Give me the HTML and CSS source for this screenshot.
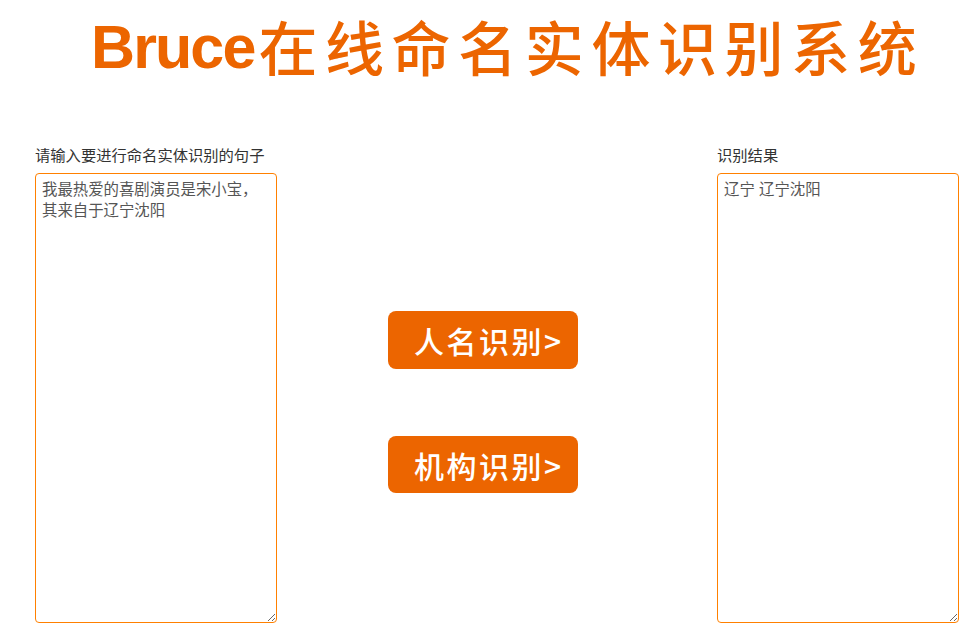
FILE: index.html
```html
<!DOCTYPE html>
<html>
	<head>
		<meta charset='utf-8'/>
		<title>Bruce在线命名实体识别系统</title>
		<link rel="stylesheet" href="styles.css">
	</head>
	<body>
		<h1 class="banner"><span class="banner-latin">Bruce</span><span class="banner-cjk">在线命名实体识别系统</span></h1>
		<div class="workspace">
			<div class="panel">
				<label class="panel-label" for="source">请输入要进行命名实体识别的句子</label>
				<textarea class="panel-text" id="source">我最热爱的喜剧演员是宋小宝，其来自于辽宁沈阳</textarea>
			</div>
			<div class="actions">
				<button class="action" type="button">人名识别&gt;</button>
				<button class="action action-second" type="button">机构识别&gt;</button>
			</div>
			<div class="panel">
				<label class="panel-label" for="result">识别结果</label>
				<textarea class="panel-text" id="result">辽宁 辽宁沈阳</textarea>
			</div>
		</div>
	</body>
</html>
```

FILE: styles.css
```css
body {
	margin: 0;
	background: #fff;
	color: #333;
	font-family: "Liberation Sans", "Noto Sans CJK SC", sans-serif;
	font-size: 15.3px;
	overflow: hidden;
}
.banner {
	margin: 0;
	height: 145px;
	padding: 11px 0 0 91px;
	box-sizing: border-box;
	color: #ec6500;
	display: flex;
	align-items: flex-start;
	font-weight: 700;
	white-space: nowrap;
	filter: blur(0.4px);
}
.banner-latin {
	font-family: "Liberation Sans", sans-serif;
	font-size: 61px;
	line-height: 70px;
	letter-spacing: -1.9px;
	padding-top: 1px;
}
.banner-cjk {
	font-family: "Noto Sans CJK SC", sans-serif;
	font-size: 59px;
	line-height: 70px;
	font-weight: 500;
	letter-spacing: 7.6px;
	margin-left: 4px;
}
.workspace {
	display: grid;
	grid-template-columns: 242px 1fr 242px;
	padding: 0 18px 0 35px;
}
.panel {
	display: flex;
	flex-direction: column;
}
.panel-label {
	height: 28px;
	line-height: 22px;
	color: #333;
}
.panel-text {
	width: 242px;
	height: 450px;
	box-sizing: border-box;
	border: 1px solid #ff8000;
	border-radius: 4px;
	padding: 5px 6px;
	margin: 0;
	color: #555;
	font-family: "Liberation Sans", "Noto Sans CJK SC", sans-serif;
	font-size: 15.4px;
	line-height: 21px;
	outline: none;
}
.actions {
	display: flex;
	flex-direction: column;
	align-items: center;
	padding: 166px 28px 0 0;
}
.action {
	width: 190px;
	height: 58px;
	padding: 0 0 0 26px;
	border: none;
	border-radius: 8px;
	background: #ec6500;
	color: #fff;
	font-family: "Noto Sans CJK SC", sans-serif;
	font-size: 30px;
	font-weight: 500;
	letter-spacing: 2.5px;
	text-align: left;
	white-space: nowrap;
}
.action-second {
	margin-top: 67px;
	height: 57px;
}
```
